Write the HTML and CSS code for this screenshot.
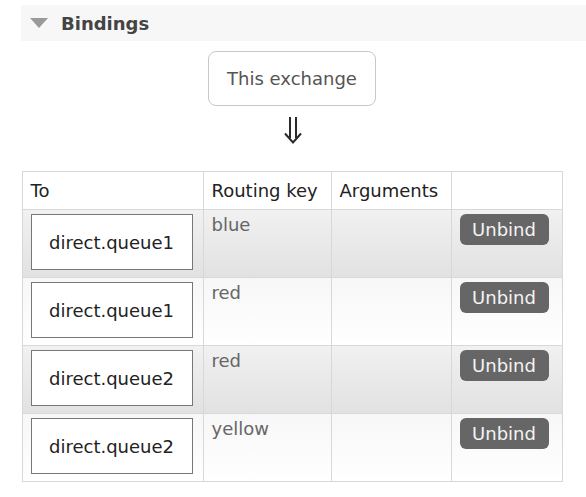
FILE: index.html
```html
<!DOCTYPE html>
<html>
<head>
<meta charset="utf-8">
<link rel="stylesheet" href="styles.css">
</head>
<body>
<div class="section-head">
  <span class="tri"></span>
  <h2 class="title">Bindings</h2>
</div>
<div class="flow">
  <div class="exchange-box">This exchange</div>
  <div class="arrow">
    <svg width="20" height="27" viewBox="0 0 20 27" aria-label="⇓">
      <path d="M7 0 V21 M13 0 V21" stroke="#2a2a2a" stroke-width="2" fill="none"/>
      <path d="M2 16.5 L10 25.5 L18 16.5" stroke="#2a2a2a" stroke-width="2" fill="none" stroke-linejoin="miter"/>
    </svg>
  </div>
  <table class="list">
    <colgroup>
      <col class="c1"><col class="c2"><col class="c3"><col class="c4">
    </colgroup>
    <thead>
      <tr><th>To</th><th>Routing key</th><th>Arguments</th><th></th></tr>
    </thead>
    <tbody>
      <tr class="alt1">
        <td class="to"><span class="queue">direct.queue1</span></td>
        <td class="key">blue</td>
        <td></td>
        <td class="act"><span class="btn">Unbind</span></td>
      </tr>
      <tr class="alt2">
        <td class="to"><span class="queue">direct.queue1</span></td>
        <td class="key">red</td>
        <td></td>
        <td class="act"><span class="btn">Unbind</span></td>
      </tr>
      <tr class="alt1">
        <td class="to"><span class="queue">direct.queue2</span></td>
        <td class="key">red</td>
        <td></td>
        <td class="act"><span class="btn">Unbind</span></td>
      </tr>
      <tr class="alt2">
        <td class="to"><span class="queue">direct.queue2</span></td>
        <td class="key">yellow</td>
        <td></td>
        <td class="act"><span class="btn">Unbind</span></td>
      </tr>
    </tbody>
  </table>
</div>
</body>
</html>
```

FILE: styles.css
```css
html, body {
  margin: 0;
  padding: 0;
  background: #fff;
}
body {
  font-family: "DejaVu Sans", Verdana, sans-serif;
  font-size: 18px;
  color: #333;
}
.section-head {
  margin: 5px 0 0 21px;
  height: 36px;
  background: #f7f7f7;
  display: flex;
  align-items: center;
  padding-left: 9px;
}
.tri {
  width: 0;
  height: 0;
  border-left: 9px solid transparent;
  border-right: 9px solid transparent;
  border-top: 10px solid #9a9a9a;
  margin-right: 13px;
}
.title {
  margin: 0;
  font-size: 18px;
  font-weight: bold;
  color: #444;
}
.flow {
  width: 540px;
  margin-left: 22px;
  display: flex;
  flex-direction: column;
  align-items: center;
}
.exchange-box {
  margin-top: 10px;
  width: 168px;
  height: 55px;
  box-sizing: border-box;
  border: 1px solid #c8c8c8;
  border-radius: 8px;
  display: flex;
  align-items: center;
  justify-content: center;
  color: #555;
}
.arrow {
  height: 65px;
  box-sizing: border-box;
  padding-top: 11px;
  padding-left: 1px;
  line-height: 0;
}
table.list {
  width: 540px;
  border-collapse: collapse;
  table-layout: fixed;
  border: 1px solid #d8d8d8;
}
col.c1 { width: 181px; }
col.c2 { width: 128px; }
col.c3 { width: 120px; }
col.c4 { width: 111px; }
table.list th {
  height: 38px;
  box-sizing: border-box;
  padding: 0 8px;
  text-align: left;
  font-weight: normal;
  color: #222;
  border: 1px solid #d8d8d8;
  background: #fff;
  vertical-align: middle;
}
table.list td {
  height: 68px;
  box-sizing: border-box;
  border: 1px solid #d8d8d8;
  vertical-align: top;
  padding: 4px 8px 0 8px;
}
tr.alt1 {
  background: linear-gradient(to bottom, #f1f1f1 0%, #e1e1e1 100%);
}
tr.alt2 {
  background: linear-gradient(to bottom, #f7f7f7 0%, #ffffff 100%);
}
td.to {
  padding-left: 9px;
}
.queue {
  display: flex;
  align-items: center;
  justify-content: center;
  width: 162px;
  height: 56px;
  box-sizing: border-box;
  border: 1px solid #777;
  background: #fff;
  color: #222;
}
td.key {
  color: #666;
  padding-top: 5px;
}
.btn {
  display: inline-flex;
  align-items: center;
  justify-content: center;
  width: 89px;
  height: 31px;
  border-radius: 6px;
  background: #666;
  color: #f4f4f4;
}
```
